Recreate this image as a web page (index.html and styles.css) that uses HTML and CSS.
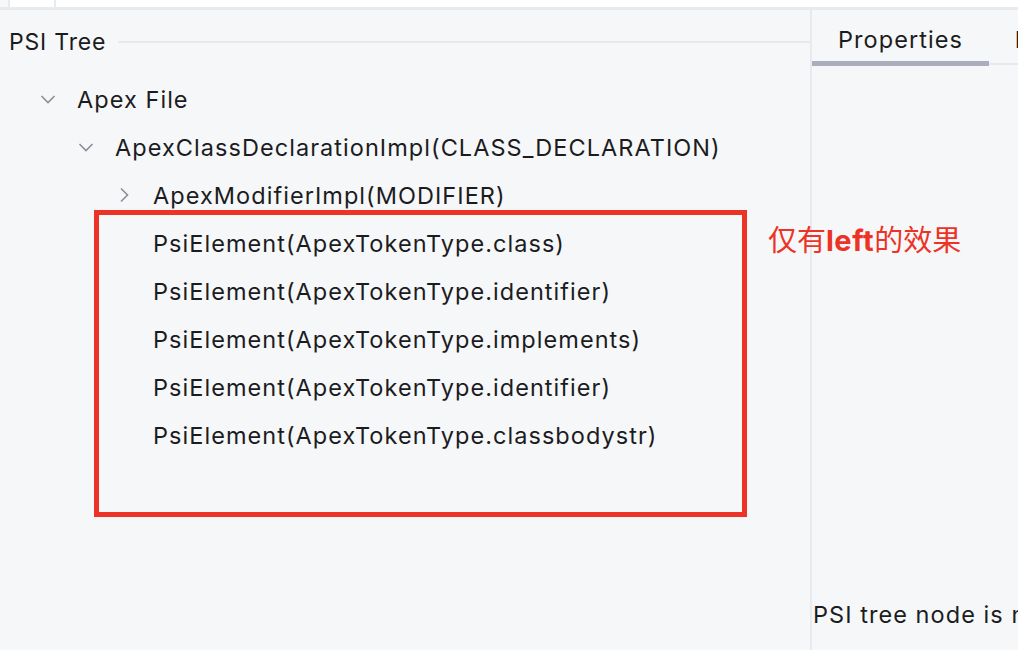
FILE: index.html
```html
<!DOCTYPE html>
<html>
<head>
<meta charset="utf-8">
<link rel="stylesheet" href="styles.css">
</head>
<body>
<div class="topbar">
  <div class="topcell small"></div>
  <div class="topcell grow"></div>
</div>
<div class="main">
  <div class="left">
    <div class="title-row">
      <span class="title">PSI Tree</span>
      <span class="title-line"></span>
    </div>
    <div class="tree">
      <div class="row lvl0">
        <svg class="chev" width="16" height="16" viewBox="0 0 16 16"><path d="M1.5 5 L8 11.5 L14.5 5" fill="none" stroke="#8b8e98" stroke-width="1.6"/></svg>
        <span>Apex File</span>
      </div>
      <div class="row lvl1">
        <svg class="chev" width="16" height="16" viewBox="0 0 16 16"><path d="M1.5 5 L8 11.5 L14.5 5" fill="none" stroke="#8b8e98" stroke-width="1.6"/></svg>
        <span>ApexClassDeclarationImpl(CLASS_DECLARATION)</span>
      </div>
      <div class="row lvl2">
        <svg class="chev" width="16" height="16" viewBox="0 0 16 16"><path d="M5 1.5 L11.5 8 L5 14.5" fill="none" stroke="#8b8e98" stroke-width="1.6"/></svg>
        <span>ApexModifierImpl(MODIFIER)</span>
      </div>
      <div class="row lvl2"><span class="nochev"></span><span>PsiElement(ApexTokenType.class)</span></div>
      <div class="row lvl2"><span class="nochev"></span><span>PsiElement(ApexTokenType.identifier)</span></div>
      <div class="row lvl2"><span class="nochev"></span><span>PsiElement(ApexTokenType.implements)</span></div>
      <div class="row lvl2"><span class="nochev"></span><span>PsiElement(ApexTokenType.identifier)</span></div>
      <div class="row lvl2"><span class="nochev"></span><span>PsiElement(ApexTokenType.classbodystr)</span></div>
    </div>
    <div class="redbox"></div>
    <div class="note">仅有<b>left</b>的效果</div>
  </div>
  <div class="right">
    <div class="tabs">
      <div class="tab active">Properties</div>
      <div class="tab">E</div>
    </div>
    <div class="props"></div>
    <div class="status">PSI tree node is not selected</div>
  </div>
</div>
</body>
</html>
```
FILE: styles.css
```css
* { box-sizing: border-box; }
html, body { margin: 0; padding: 0; }
body {
  width: 1018px;
  height: 650px;
  overflow: hidden;
  background: #f6f7f9;
  font-family: Inter, "Noto Sans CJK SC", sans-serif;
  color: #1c1c1e;
  display: flex;
  flex-direction: column;
}
.topbar {
  height: 10px;
  display: flex;
  padding-left: 8px;
  border-bottom: 3px solid #e9eaee;
  background: #f6f7f9;
  flex: none;
}
.topcell { background: #fff; height: 7px; border-left: 2px solid #e9eaee; }
.topcell.small { width: 46px; }
.topcell.grow { flex: 1; }
.main {
  flex: 1;
  display: flex;
  min-height: 0;
}
.left {
  width: 812px;
  border-right: 2px solid #e9eaee;
  position: relative;
  flex: none;
}
.title-row {
  display: flex;
  align-items: center;
  padding: 19px 0 0 9px;
  height: 44px;
}
.title {
  font-size: 23px;
  line-height: 26px;
  letter-spacing: 0.8px;
}
.title-line {
  flex: 1;
  height: 2px;
  background: #e8e9ed;
  margin-left: 12px;
}
.tree {
  padding-top: 21px;
}
.row {
  height: 48px;
  display: flex;
  align-items: center;
  font-size: 23.5px;
  letter-spacing: 1.05px;
  white-space: nowrap;
}
.row .chev, .row .nochev {
  width: 16px;
  height: 16px;
  flex: none;
  margin-right: 21px;
}
.lvl0 { padding-left: 40px; }
.lvl1 { padding-left: 78px; }
.lvl2 { padding-left: 116px; }
.redbox {
  position: absolute;
  left: 94px;
  top: 200px;
  width: 653px;
  height: 307px;
  border: 5px solid #ec3326;
}
.note {
  position: absolute;
  left: 768px;
  top: 214px;
  font-size: 29px;
  line-height: 34px;
  color: #ec3326;
  white-space: nowrap;
  z-index: 2;
}
.note b { font-weight: 700; letter-spacing: 0.5px; }
.right {
  flex: 1;
  display: flex;
  flex-direction: column;
  min-width: 0;
  overflow: hidden;
}
.tabs {
  display: flex;
  height: 55px;
  border-bottom: 2px solid #e8e9ed;
  flex: none;
}
.tab {
  font-size: 23.5px;
  letter-spacing: 1.05px;
  padding: 15px 26px 0 26px;
  white-space: nowrap;
}
.tab.active {
  width: 178px;
  border-bottom: 5px solid #a9adbe;
  margin-bottom: -3px;
}
.props { flex: 1; }
.status {
  font-size: 23.5px;
  letter-spacing: 1.05px;
  white-space: nowrap;
  padding-left: 1px;
  height: 50px;
}
```
